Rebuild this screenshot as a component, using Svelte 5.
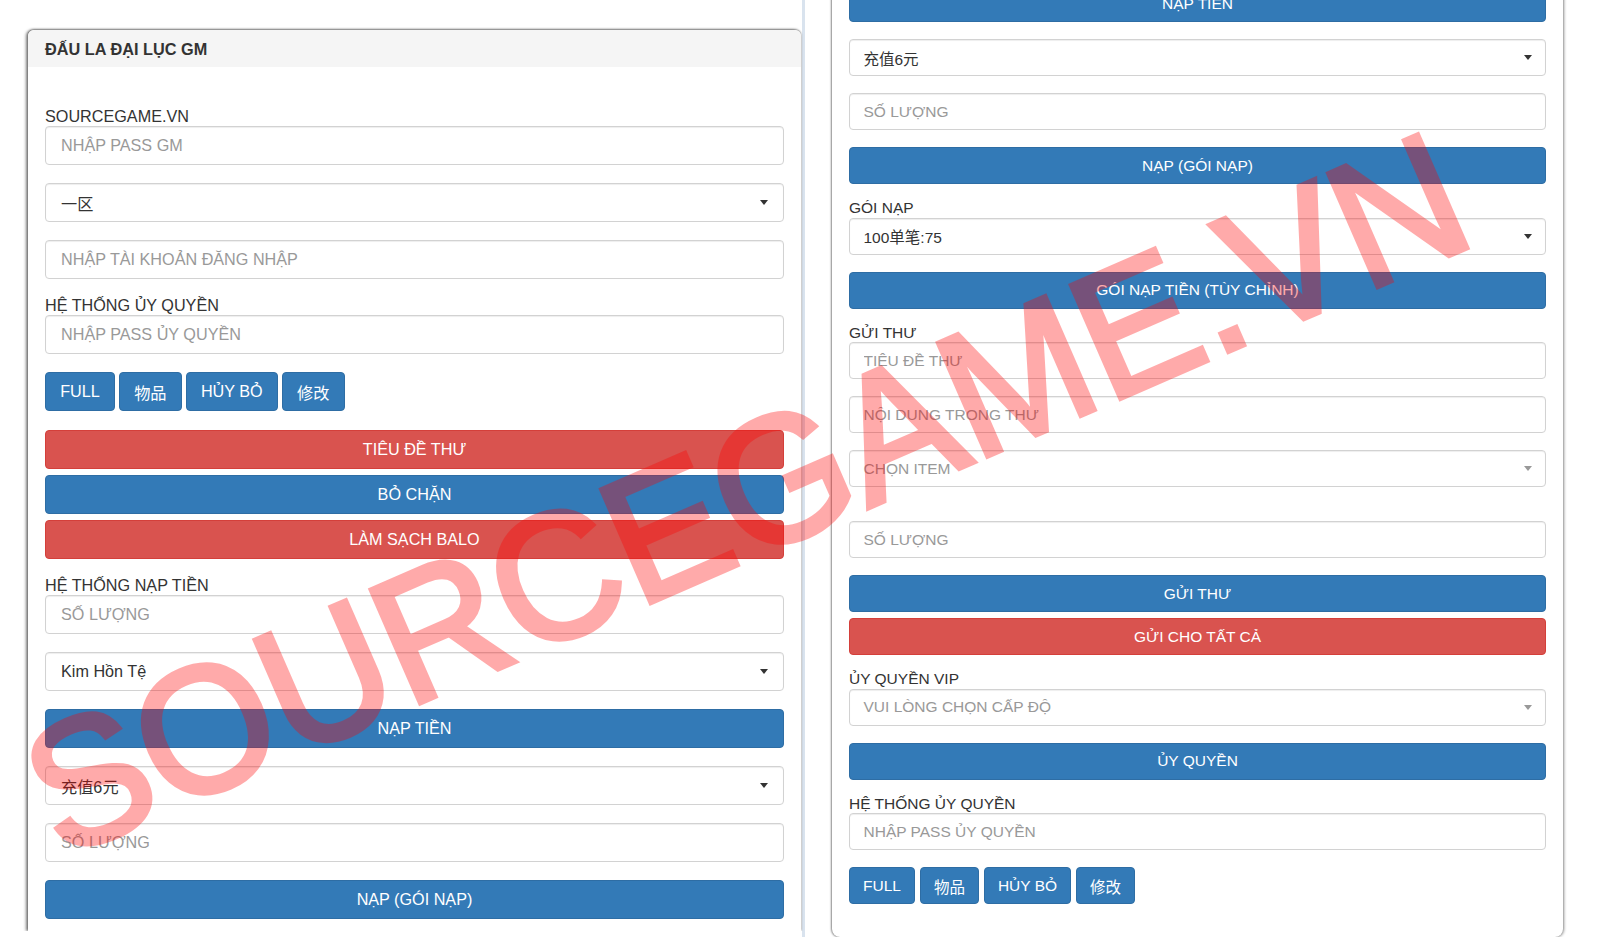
<script>
  const leftRows = [
    { kind: 'label', text: 'SOURCEGAME.VN' },
    { kind: 'input', text: 'NHẬP PASS GM' },
    { kind: 'select', text: '一区' },
    { kind: 'input', text: 'NHẬP TÀI KHOẢN ĐĂNG NHẬP' },
    { kind: 'label', text: 'HỆ THỐNG ỦY QUYỀN' },
    { kind: 'input', text: 'NHẬP PASS ỦY QUYỀN' },
    { kind: 'group' },
    { kind: 'danger', text: 'TIÊU ĐỀ THƯ', tight: true },
    { kind: 'primary', text: 'BỎ CHẶN', tight: true },
    { kind: 'danger', text: 'LÀM SẠCH BALO' },
    { kind: 'label', text: 'HỆ THỐNG NẠP TIỀN' },
    { kind: 'input', text: 'SỐ LƯỢNG' },
    { kind: 'select', text: 'Kim Hồn Tệ' },
    { kind: 'primary', text: 'NẠP TIỀN' },
    { kind: 'select', text: '充值6元' },
    { kind: 'input', text: 'SỐ LƯỢNG' },
    { kind: 'primary', text: 'NẠP (GÓI NẠP)' }
  ];

  const rightRows = [
    { kind: 'primary', text: 'NẠP TIỀN' },
    { kind: 'select', text: '充值6元' },
    { kind: 'input', text: 'SỐ LƯỢNG' },
    { kind: 'primary', text: 'NẠP (GÓI NẠP)' },
    { kind: 'label', text: 'GÓI NẠP' },
    { kind: 'select', text: '100单笔:75' },
    { kind: 'primary', text: 'GÓI NẠP TIỀN (TÙY CHỈNH)' },
    { kind: 'label', text: 'GỬI THƯ' },
    { kind: 'input', text: 'TIÊU ĐỀ THƯ' },
    { kind: 'input', text: 'NỘI DUNG TRONG THƯ' },
    { kind: 'select', text: 'CHỌN ITEM', muted: true },
    { kind: 'label', text: '' },
    { kind: 'input', text: 'SỐ LƯỢNG' },
    { kind: 'primary', text: 'GỬI THƯ', tight: true },
    { kind: 'danger', text: 'GỬI CHO TẤT CẢ' },
    { kind: 'label', text: 'ỦY QUYỀN VIP' },
    { kind: 'select', text: 'VUI LÒNG CHỌN CẤP ĐỘ', muted: true },
    { kind: 'primary', text: 'ỦY QUYỀN' },
    { kind: 'label', text: 'HỆ THỐNG ỦY QUYỀN' },
    { kind: 'input', text: 'NHẬP PASS ỦY QUYỀN' },
    { kind: 'group' }
  ];

  const groupButtons = ['FULL', '物品', 'HỦY BỎ', '修改'];
</script>

{#snippet row(item)}
  {#if item.kind === 'label'}
    <div class="field-label">{item.text}</div>
  {:else if item.kind === 'input'}
    <input class="control" placeholder={item.text} />
  {:else if item.kind === 'select'}
    <div class="control select" class:muted={item.muted}>
      <span>{item.text}</span>
      <span class="caret"></span>
    </div>
  {:else if item.kind === 'group'}
    <div class="btn-row">
      {#each groupButtons as name}
        <button class="btn primary small">{name}</button>
      {/each}
    </div>
  {:else}
    <button class="btn block {item.kind}" class:tight={item.tight}>{item.text}</button>
  {/if}
{/snippet}

<div class="page">
  <section class="panel left">
    <h3 class="panel-heading">ĐẤU LA ĐẠI LỤC GM</h3>
    <div class="panel-body">
      {#each leftRows as item}
        {@render row(item)}
      {/each}
    </div>
  </section>

  <div class="divider"></div>

  <section class="panel right">
    <div class="panel-body">
      {#each rightRows as item}
        {@render row(item)}
      {/each}
    </div>
  </section>

  <!-- watermark -->
  <div class="watermark">SOURCEGAME.VN</div>
</div>

<style>
  :global(body) {
    margin: 0;
    background: #fff;
  }

  .page {
    position: relative;
    display: flex;
    align-items: flex-start;
    width: 1600px;
    height: 937px;
    overflow: hidden;
    font-family: "Liberation Sans", "Noto Sans CJK SC", Arial, sans-serif;
    color: #333;
  }

  .panel {
    box-sizing: border-box;
    background: #fff;
  }

  .left {
    --h: 39px;
    --gap: 18px;
    --label: 18px;
    --label-line: 16px;
    --size: 16.2px;
    --pad: 15px;
    --small-pad: 14.2px;
    --small-gap: 4px;
    width: 773px;
    height: 901px;
    margin: 30px 0 0 28px;
    border-radius: 6px 6px 0 0;
    box-shadow: -2px 0 3px rgba(0, 0, 0, 0.5), 0 -1px 2px rgba(0, 0, 0, 0.35), 1px 0 2px rgba(0, 0, 0, 0.12);
    clip-path: inset(-8px -8px 0 -8px);
  }

  .right {
    --h: 37px;
    --gap: 17px;
    --label: 16.7px;
    --label-line: 14px;
    --size: 15.5px;
    --pad: 13.5px;
    --small-pad: 13px;
    --small-gap: 5px;
    width: 731px;
    height: 952px;
    margin: -15px 0 0 27px;
    border-radius: 0 0 8px 8px;
    box-shadow: -1px 0 2px rgba(0, 0, 0, 0.4), 1px 0 3px rgba(0, 0, 0, 0.45);
  }

  .divider {
    flex: none;
    width: 3px;
    height: 937px;
    margin-left: 1px;
    background: #d9e3ee;
  }

  .panel-heading {
    box-sizing: border-box;
    height: 37px;
    margin: 0;
    padding: 10px 17px 0;
    font-size: 16.3px;
    line-height: 18px;
    font-weight: 700;
    background: #f5f5f5;
    border-radius: 6px 6px 0 0;
  }

  .panel-body {
    display: flex;
    flex-direction: column;
    padding: 0 17px;
  }

  .left .panel-body {
    padding-top: 41px;
  }

  .field-label {
    height: var(--label);
    font-size: var(--size);
    line-height: var(--label-line);
    white-space: nowrap;
  }

  .control {
    box-sizing: border-box;
    flex: none;
    display: block;
    width: 100%;
    height: var(--h);
    margin: 0 0 var(--gap);
    padding: 0 var(--pad);
    font: inherit;
    font-size: var(--size);
    color: #333;
    background: #fff;
    border: 1.5px solid #d2d2d2;
    border-radius: 4px;
    box-shadow: inset 0 1px 1px rgba(0, 0, 0, 0.07);
    outline: none;
  }

  .control::placeholder {
    color: #999;
    opacity: 1;
  }

  .select {
    display: flex;
    align-items: center;
    justify-content: space-between;
  }

  .select.muted {
    color: #999;
  }

  .caret {
    width: 0;
    height: 0;
    border-top: 5px solid currentColor;
    border-left: 4px solid transparent;
    border-right: 4px solid transparent;
  }

  .btn {
    box-sizing: border-box;
    flex: none;
    height: var(--h);
    padding: 0 var(--pad);
    font: inherit;
    font-size: var(--size);
    color: #fff;
    border-radius: 4px;
    border: 1px solid transparent;
    text-align: center;
  }

  .btn.small {
    padding: 0 var(--small-pad);
  }

  .block {
    width: 100%;
    margin-bottom: var(--gap);
  }

  .block.tight {
    margin-bottom: 6px;
  }

  .primary {
    background: #337ab7;
    border-color: #2e6da4;
  }

  .danger {
    background: #d9534f;
    border-color: #d43f3a;
  }

  .btn-row {
    display: flex;
    gap: var(--small-gap);
    margin-bottom: var(--gap);
  }

  .left .btn-row {
    margin-bottom: 19px;
  }

  .watermark {
    position: absolute;
    left: 0;
    top: 0;
    width: 1600px;
    font-size: 174px;
    line-height: 1;
    white-space: nowrap;
    color: #f00;
    -webkit-text-stroke: 5px #f00;
    opacity: 0.33;
    transform-origin: 0 0;
    transform: translate(1px, 720px) rotate(-23.5deg) scale(1, 1.03);
    pointer-events: none;
  }
</style>
